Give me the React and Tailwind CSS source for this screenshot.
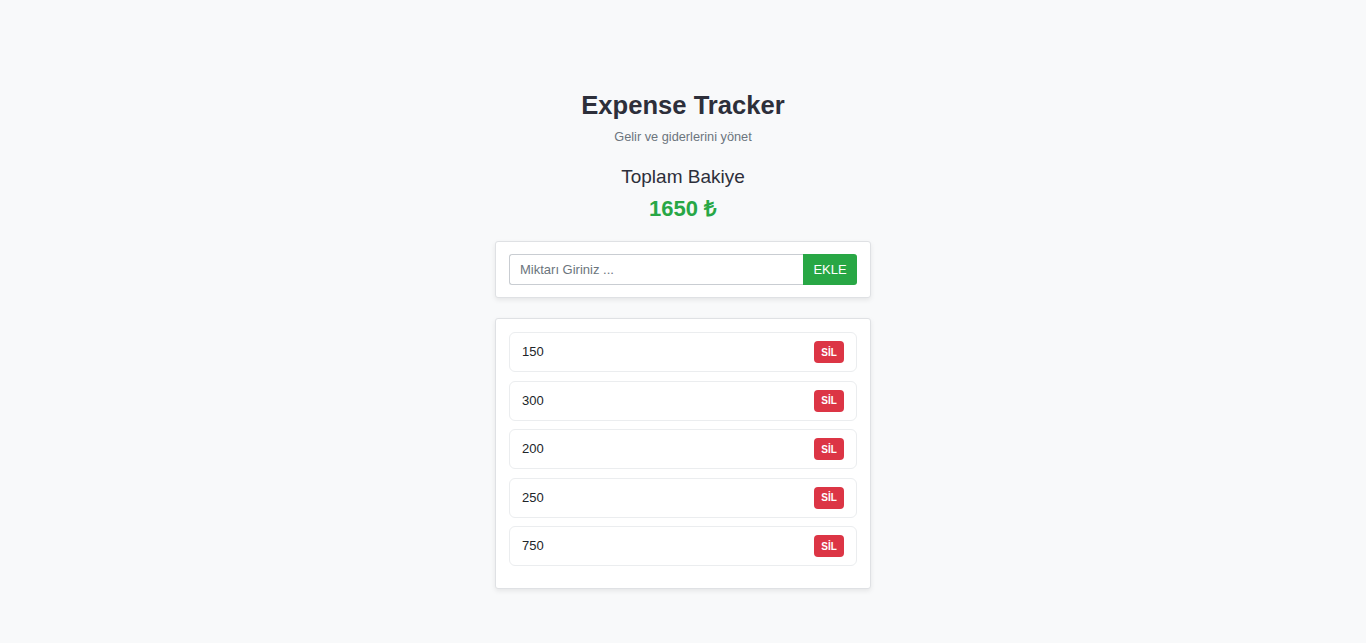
import React, { useState } from 'react';

function App() {
    const [amount, setAmount] = useState('');
    const [items, setItems] = useState([150, 300, 200, 250, 750]);

    const total = items.reduce((sum, n) => sum + n, 0);

    const handleAdd = () => {
        const n = Number(amount);
        if (!n) return;
        setItems((prev) => [...prev, n]);
        setAmount('');
    };

    const handleDelete = (index) => {
        setItems((prev) => prev.filter((_, i) => i !== index));
    };

    return (
        <div className="min-h-screen bg-[#f8f9fa] font-['Liberation_Sans',Arial,sans-serif] text-[#343a40]">
            <div className="w-[376px] mx-auto pt-[88px]">
                <h1 className="text-center text-[25.6px] leading-[34px] font-bold text-[#2d2f3a]">Expense Tracker</h1>
                <p className="text-center text-[12.75px] leading-[16px] mt-[7px] text-[#6c757d]">Gelir ve giderlerini yönet</p>
                <h2 className="text-center text-[19px] leading-[24px] mt-[20px] text-[#2d2f3a]">Toplam Bakiye</h2>
                <div className="text-center text-[22px] leading-[28px] font-bold mt-[6px] text-[#28a745]">{total} ₺</div>

                <div className="mt-[18px] bg-white border border-[#dfe1e4] rounded-[3px] shadow-[0_2px_5px_rgba(0,0,0,0.08)] px-[13px] py-[12px]">
                    <div className="flex">
                        <input
                            className="flex-1 h-[31px] px-[10px] text-[13px] border border-[#c9cdd2] border-r-0 rounded-l-[3px] outline-none placeholder:text-[#6c757d]"
                            placeholder="Miktarı Giriniz ..."
                            type="number"
                            value={amount}
                            onChange={(e) => setAmount(e.target.value)}
                        />
                        <button
                            onClick={handleAdd}
                            className="w-[54px] h-[31px] bg-[#28a745] text-white text-[13px] rounded-r-[3px]"
                        >
                            EKLE
                        </button>
                    </div>
                </div>

                <div className="mt-[20px] bg-white border border-[#dfe1e4] rounded-[3px] shadow-[0_2px_5px_rgba(0,0,0,0.08)] px-[13px] pt-[13px] pb-[13px]">
                    {items.map((item, i) => (
                        <div
                            key={i}
                            className="flex items-center justify-between h-[40px] mb-[8.5px] border border-[#ebedef] rounded-[6px] pl-[12px] pr-[12px]"
                        >
                            <span className="text-[13px] text-[#212529]">{item}</span>
                            <button
                                onClick={() => handleDelete(i)}
                                className="w-[30px] h-[22px] bg-[#dc3545] text-white text-[10px] font-bold rounded-[4px]"
                            >
                                SİL
                            </button>
                        </div>
                    ))}
                </div>
            </div>
        </div>
    );
}

export default App;
